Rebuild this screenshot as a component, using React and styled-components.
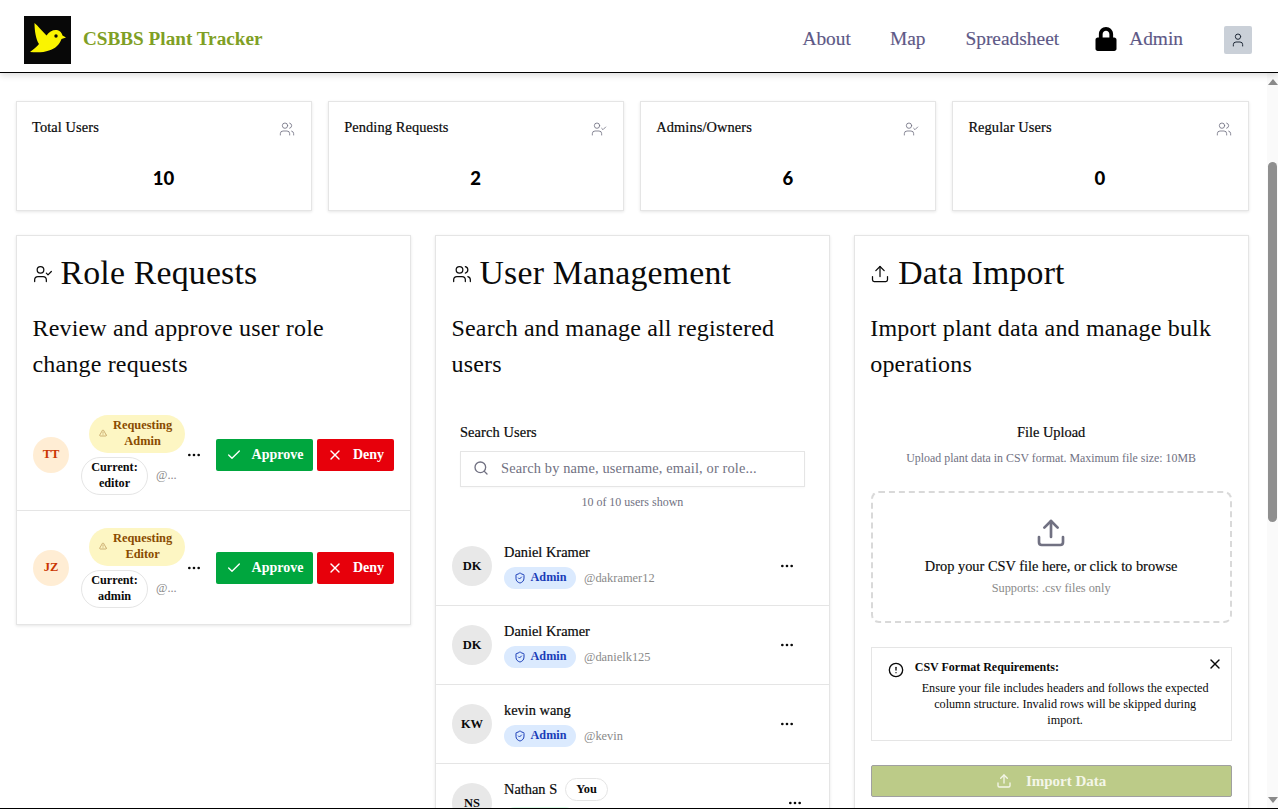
import React from 'react'
import styled, { createGlobalStyle } from 'styled-components'
import { Users, UserCheck, Upload, Search, Check, X, Ellipsis, ShieldCheck, CircleAlert, TriangleAlert, User } from 'lucide-react'
import { FaLock } from 'react-icons/fa'

const serif = '"Liberation Serif", "Times New Roman", serif'

const GlobalStyle = createGlobalStyle`
  html, body { margin: 0; padding: 0; height: 100%; overflow: hidden; }
  * { box-sizing: border-box; }
  body { font-family: ${serif}; color: #0a0a0a; background: #fff; }
`

const Page = styled.div`
  height: 809px;
  display: flex;
  flex-direction: column;
  border-bottom: 1px solid #000;
  overflow: hidden;
`

const Header = styled.header`
  height: 73px;
  flex: none;
  display: flex;
  align-items: center;
  padding: 8px 26px 0 24px;
  background: #fff;
  border-bottom: 1px solid #000;
  box-shadow: 0 3px 6px rgba(0, 0, 0, 0.12);
  position: relative;
  z-index: 2;
`

const Logo = styled.svg`
  width: 47px;
  height: 48px;
  display: block;
  flex: none;
`

const Brand = styled.div`
  margin-left: 12px;
  margin-top: -2px;
  font-size: 19.2px;
  font-weight: 700;
  color: #7f9f25;
`

const Nav = styled.nav`
  margin-left: auto;
  margin-top: -2px;
  display: flex;
  align-items: center;
`

const NavLink = styled.a`
  font-size: 19.4px;
  color: #5d5886;
  margin-left: ${p => p.$gap || 40}px;
  -webkit-text-stroke: 0.15px #5d5886;
`

const LockIcon = styled(FaLock)`
  width: 24px;
  height: 24px;
  color: #000;
  margin-left: 35px;
  flex: none;
`

const AccountButton = styled.div`
  width: 28px;
  height: 28px;
  margin-left: 41px;
  margin-top: 2px;
  background: #cad0d8;
  border-radius: 2px;
  display: flex;
  align-items: center;
  justify-content: center;
  color: #1f2937;
`

const Body = styled.div`
  flex: 1;
  min-height: 0;
  display: flex;
`

const Content = styled.main`
  flex: 1;
  min-width: 0;
  padding: 28px 18.5px 0 16px;
  overflow: hidden;
`

const ScrollTrack = styled.div`
  width: 11px;
  flex: none;
  background: #fafafa;
  display: flex;
  flex-direction: column;
  align-items: center;
  padding-top: 6px;
`

const ArrowUp = styled.div`
  width: 0;
  height: 0;
  border-left: 5px solid transparent;
  border-right: 5px solid transparent;
  border-bottom: 6px solid #8a8a8a;
`

const ScrollThumb = styled.div`
  width: 9px;
  height: 360px;
  margin-top: 77px;
  border-radius: 5px;
  background: #8f8f8f;
`

const ArrowDown = styled.div`
  width: 0;
  height: 0;
  margin-top: auto;
  margin-bottom: 5px;
  border-left: 5px solid transparent;
  border-right: 5px solid transparent;
  border-top: 6px solid #8a8a8a;
`

const StatGrid = styled.section`
  display: grid;
  grid-template-columns: repeat(4, 1fr);
  gap: 16px;
`

const Card = styled.div`
  background: #fff;
  border: 1px solid #e5e5e5;
  box-shadow: 0 1px 3px rgba(0, 0, 0, 0.1);
`

const StatCard = styled(Card)`
  height: 110px;
  padding: 15px 16px 0 15px;
`

const StatTop = styled.div`
  display: flex;
  justify-content: space-between;
  align-items: flex-start;
  font-size: 14.4px;
  line-height: 20px;
  letter-spacing: 0.1px;
  -webkit-text-stroke: 0.2px #0a0a0a;
  svg { color: #717182; margin-top: 4px; }
`

const StatValue = styled.div`
  margin-top: 25px;
  text-align: center;
  font-family: Lato, sans-serif;
  font-size: 18.5px;
  line-height: 32px;
  font-weight: 900;
  color: #000;
`

const Columns = styled.section`
  margin-top: 24px;
  display: grid;
  grid-template-columns: repeat(3, 1fr);
  gap: 24px;
  align-items: start;
`

const Panel = styled(Card)`
  min-height: 0;
`

const TallPanel = styled(Panel)`
  height: 700px;
`

const PanelHead = styled.div`
  padding: 16px 16px 0 15.5px;
`

const PanelTitle = styled.h2`
  margin: 0;
  display: flex;
  align-items: center;
  gap: 8px;
  font-size: 33.8px;
  line-height: 42px;
  font-weight: 400;
  letter-spacing: 0.2px;
  color: #0a0a0a;
  svg { flex: none; margin-top: 2px; }
`

const PanelText = styled.p`
  margin: 16px 0 0;
  font-size: 24px;
  line-height: 36px;
  letter-spacing: 0.17px;
`

const RequestList = styled.div`
  margin-top: 17px;
`

const RequestRow = styled.div`
  padding: 0 16px;
  display: flex;
  align-items: center;
  border-top: ${p => (p.$first ? 'none' : '1px solid #e5e5e5')};
  height: ${p => (p.$first ? 111 : 114)}px;
`

const Avatar = styled.div`
  flex: none;
  width: ${p => p.$size}px;
  height: ${p => p.$size}px;
  border-radius: 50%;
  display: flex;
  align-items: center;
  justify-content: center;
  font-weight: 700;
  font-size: 12.5px;
  background: ${p => p.$bg};
  color: ${p => p.$fg};
`

const RequestInfo = styled.div`
  width: 95px;
  margin-left: 12px;
  flex: none;
  display: flex;
  flex-direction: column;
  gap: 4px;
`

const RequestPill = styled.div`
  width: 96px;
  height: 38px;
  margin-left: 8px;
  padding: 0 10px 2px;
  border-radius: 19px;
  background: #fdf6c3;
  color: #894b00;
  font-size: 12.4px;
  font-weight: 700;
  line-height: 16px;
  display: flex;
  align-items: center;
  gap: 6px;
  text-align: center;
  svg { flex: none; opacity: 0.6; }
`

const RequestMeta = styled.div`
  display: flex;
  align-items: center;
  gap: 8px;
`

const CurrentPill = styled.div`
  width: 67px;
  height: 38px;
  flex: none;
  padding-bottom: 2px;
  border: 1px solid #e5e5e5;
  border-radius: 19px;
  font-size: 12.2px;
  font-weight: 700;
  line-height: 16px;
  display: flex;
  align-items: center;
  justify-content: center;
  text-align: center;
`

const Handle = styled.span`
  font-size: 12.4px;
  color: #8a8a8a;
`

const Dots = styled(Ellipsis)`
  flex: none;
  color: #0a0a0a;
`

const RequestDots = styled(Dots)`
  margin-left: 10px;
`

const ActionButton = styled.button`
  height: 32px;
  width: ${p => p.$width}px;
  margin-left: ${p => p.$gap}px;
  flex: none;
  border: 0;
  border-radius: 2px;
  background: ${p => p.$bg};
  color: #fff;
  font-family: ${serif};
  font-size: 14px;
  font-weight: 700;
  display: flex;
  align-items: center;
  justify-content: center;
  gap: 10px;
  padding: 0;
`

const SearchBlock = styled.div`
  padding: 40px 24px 0;
`

const SearchLabel = styled.div`
  font-size: 14.4px;
  line-height: 20px;
  letter-spacing: 0.1px;
  -webkit-text-stroke: 0.2px #0a0a0a;
`

const SearchBox = styled.div`
  margin-top: 9px;
  height: 36px;
  padding: 0 12px 2px;
  border: 1px solid #e5e5e5;
  display: flex;
  align-items: center;
  gap: 12px;
  color: #717182;
  font-size: 14.4px;
  box-shadow: 0 1px 2px rgba(0, 0, 0, 0.03);
  letter-spacing: 0.15px;
`

const ResultCount = styled.div`
  margin-top: 7px;
  text-align: center;
  font-size: 12px;
  line-height: 16px;
  color: #717182;
`

const UserList = styled.div`
  margin-top: 17px;
`

const UserRow = styled.div`
  height: 79px;
  padding: 0 16px;
  border-bottom: 1px solid #e5e5e5;
  display: flex;
  align-items: center;
  gap: 12px;
`

const UserInfo = styled.div`
  flex: 1;
  min-width: 0;
  display: flex;
  flex-direction: column;
  gap: 6px;
`

const NameLine = styled.div`
  display: flex;
  align-items: center;
  gap: 8px;
  font-size: 14.4px;
  line-height: 18px;
  font-weight: 400;
  -webkit-text-stroke: 0.2px #0a0a0a;
`

const YouPill = styled.span`
  height: 23px;
  padding: 0 10px;
  border: 1px solid #e5e5e5;
  border-radius: 12px;
  font-size: 12.4px;
  font-weight: 700;
  display: flex;
  align-items: center;
  -webkit-text-stroke: 0;
`

const BadgeLine = styled.div`
  display: flex;
  align-items: center;
  gap: 8px;
`

const RoleBadge = styled.span`
  height: 22px;
  width: 72px;
  padding-bottom: 1px;
  border-radius: 11px;
  background: ${p => (p.$tone === 'green' ? '#dcfce7' : '#dbeafe')};
  color: #193cb8;
  font-size: 12.2px;
  font-weight: 700;
  display: flex;
  align-items: center;
  justify-content: center;
  gap: 5px;
`

const UserDots = styled(Dots)`
  margin-right: ${p => (p.$wide ? 10 : 18)}px;
`

const ImportBody = styled.div`
  padding: 40px 16px 0;
`

const UploadTitle = styled.div`
  text-align: center;
  font-size: 14.4px;
  line-height: 20px;
  -webkit-text-stroke: 0.2px #0a0a0a;
`

const UploadHint = styled.div`
  margin-top: 8px;
  text-align: center;
  font-size: 11.9px;
  line-height: 16px;
  color: #717182;
`

const DropZone = styled.div`
  margin-top: 25px;
  height: 132px;
  border: 2px dashed #d9d9d9;
  border-radius: 8px;
  display: flex;
  flex-direction: column;
  align-items: center;
  padding-top: 24px;
  svg { color: #717182; }
`

const DropTitle = styled.div`
  margin-top: 7px;
  font-size: 14.4px;
  line-height: 20px;
  -webkit-text-stroke: 0.15px #0a0a0a;
`

const DropHint = styled.div`
  margin-top: 4px;
  font-size: 12.3px;
  line-height: 16px;
  color: #8a8a8a;
`

const Notice = styled.div`
  margin-top: 24px;
  height: 94px;
  border: 1px solid #e5e5e5;
  padding: 11px 16px 0;
  display: grid;
  grid-template-columns: 16px 1fr;
  grid-template-rows: 16px auto;
  column-gap: 11px;
  position: relative;
  svg { margin-top: 3px; }
`

const NoticeClose = styled(X)`
  position: absolute;
  top: 5px;
  right: 8px;
`

const NoticeTitle = styled.div`
  font-size: 12px;
  line-height: 16px;
  font-weight: 700;
`

const NoticeText = styled.div`
  grid-column: 1 / 3;
  margin-top: 5px;
  padding: 0 0 0 28px;
  text-align: center;
  font-size: 12.2px;
  line-height: 16px;
`

const ImportButton = styled.button`
  margin-top: 24px;
  width: 100%;
  height: 32px;
  border: 1px solid #a0a0a0;
  border-radius: 2px;
  background: #bccb88;
  color: #f4f6e8;
  font-family: ${serif};
  font-size: 15px;
  font-weight: 700;
  display: flex;
  align-items: center;
  justify-content: center;
  gap: 14px;
`

const stats = [
  { label: 'Total Users', value: 10, Icon: Users },
  { label: 'Pending Requests', value: 2, Icon: UserCheck },
  { label: 'Admins/Owners', value: 6, Icon: UserCheck },
  { label: 'Regular Users', value: 0, Icon: Users },
]

const requests = [
  { initials: 'TT', role: ['Requesting', 'Admin'], current: 'editor' },
  { initials: 'JZ', role: ['Requesting', 'Editor'], current: 'admin' },
]

// the last row runs under the bottom edge, only the top of its green badge shows
const users = [
  { initials: 'DK', name: 'Daniel Kramer', handle: '@dakramer12', role: 'Admin' },
  { initials: 'DK', name: 'Daniel Kramer', handle: '@danielk125', role: 'Admin' },
  { initials: 'KW', name: 'kevin wang', handle: '@kevin', role: 'Admin' },
  { initials: 'NS', name: 'Nathan S', tone: 'green', you: true },
]

function BirdLogo() {
  return (
    <Logo viewBox="0 0 47 48">
      <rect width="47" height="48" fill="#080808" />
      <path
        d="M10.5 7 C14 10 18 15 22.5 19.5 C25 15.5 29 13.5 33 14 C36 14.500 38 17 38.500 19.500 L42 21.500 L37.500 23 C35.500 28.500 31 33 25 34.500 C20 36.500 13 36.500 6 36 C9.500 33.500 13 30.500 15 28 C12 23.500 10.500 15 10.500 7 Z"
        fill="#faf400"
      />
      <circle cx="32" cy="20" r="1.700" fill="#080808" />
    </Logo>
  )
}

function RequestItem({ item, first }) {
  return (
    <RequestRow $first={first}>
      <Avatar $size={36} $bg="#ffedd4" $fg="#ca3500">{item.initials}</Avatar>
      <RequestInfo>
        <RequestPill>
          <TriangleAlert size={8} />
          <span>{item.role[0]}<br />{item.role[1]}</span>
        </RequestPill>
        <RequestMeta>
          <CurrentPill><span>Current:<br />{item.current}</span></CurrentPill>
          <Handle>@...</Handle>
        </RequestMeta>
      </RequestInfo>
      <RequestDots size={16} />
      <ActionButton $bg="#00a63e" $width={97} $gap={14}><Check size={16} />Approve</ActionButton>
      <ActionButton $bg="#e7000b" $width={77} $gap={4}><X size={16} />Deny</ActionButton>
    </RequestRow>
  )
}

function UserItem({ user }) {
  return (
    <UserRow>
      <Avatar $size={40} $bg="#e8e8e8" $fg="#0a0a0a">{user.initials}</Avatar>
      <UserInfo>
        <NameLine>
          {user.name}
          {user.you && <YouPill>You</YouPill>}
        </NameLine>
        <BadgeLine>
          <RoleBadge $tone={user.tone}>
            {user.role && <ShieldCheck size={12} />}
            {user.role}
          </RoleBadge>
          <Handle>{user.handle}</Handle>
        </BadgeLine>
      </UserInfo>
      <UserDots size={16} $wide={user.you} />
    </UserRow>
  )
}

export default function App() {
  return (
    <>
      <GlobalStyle />
      <Page>
        <Header>
          <BirdLogo />
          <Brand>CSBBS Plant Tracker</Brand>
          <Nav>
            <NavLink>About</NavLink>
            <NavLink $gap={39}>Map</NavLink>
            <NavLink>Spreadsheet</NavLink>
            <LockIcon />
            <NavLink $gap={11}>Admin</NavLink>
            <AccountButton><User size={16} strokeWidth={1.5} /></AccountButton>
          </Nav>
        </Header>
        <Body>
          <Content>
            <StatGrid>
              {stats.map(s => (
                <StatCard key={s.label}>
                  <StatTop>
                    {s.label}
                    <s.Icon size={16} strokeWidth={1.25} />
                  </StatTop>
                  <StatValue>{s.value}</StatValue>
                </StatCard>
              ))}
            </StatGrid>
            <Columns>
              <Panel>
                <PanelHead>
                  <PanelTitle><UserCheck size={20} strokeWidth={1.5} />Role Requests</PanelTitle>
                  <PanelText>Review and approve user role change requests</PanelText>
                </PanelHead>
                <RequestList>
                  {requests.map((r, i) => <RequestItem key={r.initials} item={r} first={i === 0} />)}
                </RequestList>
              </Panel>
              <TallPanel>
                <PanelHead>
                  <PanelTitle><Users size={20} strokeWidth={1.5} />User Management</PanelTitle>
                  <PanelText>Search and manage all registered users</PanelText>
                </PanelHead>
                <SearchBlock>
                  <SearchLabel>Search Users</SearchLabel>
                  <SearchBox><Search size={16} />Search by name, username, email, or role...</SearchBox>
                  <ResultCount>10 of 10 users shown</ResultCount>
                </SearchBlock>
                <UserList>
                  {users.map(u => <UserItem key={u.name + u.initials + u.handle} user={u} />)}
                </UserList>
              </TallPanel>
              <TallPanel>
                <PanelHead>
                  <PanelTitle><Upload size={20} strokeWidth={1.5} />Data Import</PanelTitle>
                  <PanelText>Import plant data and manage bulk operations</PanelText>
                </PanelHead>
                <ImportBody>
                  <UploadTitle>File Upload</UploadTitle>
                  <UploadHint>Upload plant data in CSV format. Maximum file size: 10MB</UploadHint>
                  <DropZone>
                    <Upload size={32} strokeWidth={2} />
                    <DropTitle>Drop your CSV file here, or click to browse</DropTitle>
                    <DropHint>Supports: .csv files only</DropHint>
                  </DropZone>
                  <Notice>
                    <CircleAlert size={16} />
                    <NoticeTitle>CSV Format Requirements:</NoticeTitle>
                    <NoticeText>Ensure your file includes headers and follows the expected column structure. Invalid rows will be skipped during import.</NoticeText>
                    <NoticeClose size={16} />
                  </Notice>
                  <ImportButton><Upload size={16} />Import Data</ImportButton>
                </ImportBody>
              </TallPanel>
            </Columns>
          </Content>
          <ScrollTrack>
            <ArrowUp />
            <ScrollThumb />
            <ArrowDown />
          </ScrollTrack>
        </Body>
      </Page>
    </>
  )
}
